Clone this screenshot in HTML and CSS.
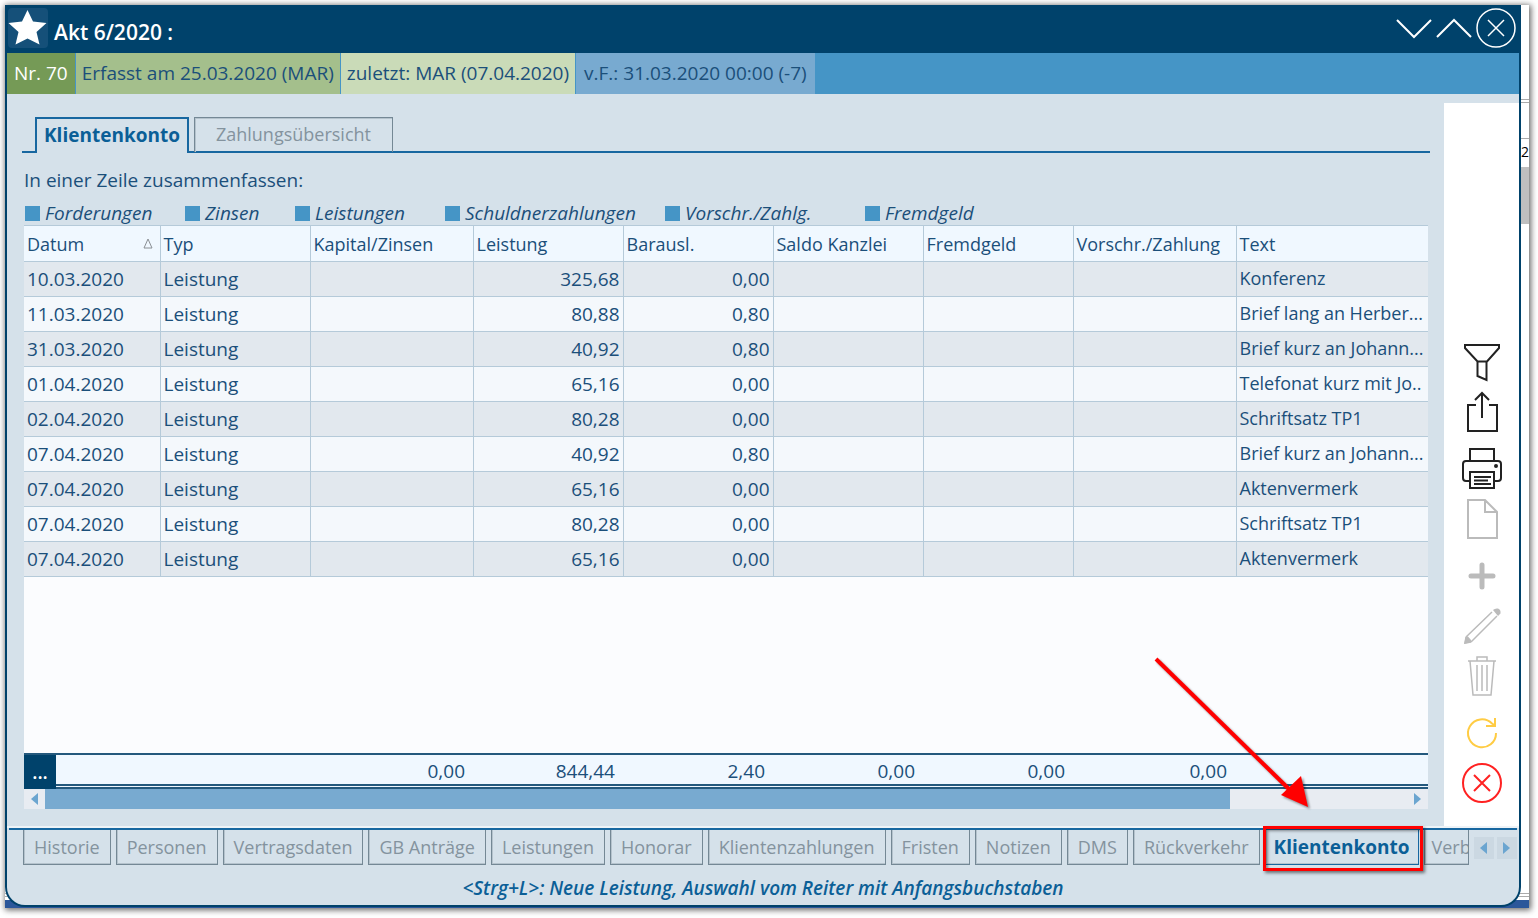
FILE: index.html
```html
<!DOCTYPE html>
<html lang="de">
<head>
<meta charset="utf-8">
<title>Akt 6/2020</title>
<link rel="stylesheet" href="styles.css">
</head>
<body>
<div class="frame">
  <main class="window">
    <header class="titlebar">
      <button class="star" aria-label="Favorit"><svg width="40" height="40" viewBox="0 0 40 40"><path fill="#fff" d="M19.500 2l5.500 11.500 13.500 1.500-10 9 3 12.500-12-6-12 6 3-12.500-10-9L14 13.500z"/></svg></button>
      <h1>Akt 6/2020 :</h1>
      <div class="controls">
        <button aria-label="Nach unten"><svg width="36" height="40" viewBox="0 0 36 40"><path d="M1 12l17 17 17-17"/></svg></button>
        <button aria-label="Nach oben"><svg width="36" height="40" viewBox="0 0 36 40"><path d="M1 29l17-17 17 17"/></svg></button>
        <button aria-label="Schließen"><svg width="40" height="40" viewBox="0 0 40 40"><circle cx="20" cy="20" r="19" stroke-width="1.500"/><path stroke-width="1.500" d="M12 12l16 16M28 12L12 28"/></svg></button>
      </div>
    </header>
    <div class="status">
      <span class="nr">Nr. 70</span>
      <span class="created">Erfasst am 25.03.2020 (MAR)</span>
      <span class="changed">zuletzt: MAR (07.04.2020)</span>
      <span class="deadline">v.F.: 31.03.2020 00:00 (-7)</span>
    </div>
    <div class="body">
      <section class="content">
        <nav class="toptabs">
          <button class="toptab current">Klientenkonto</button>
          <button class="toptab">Zahlungsübersicht</button>
        </nav>
        <p class="caption">In einer Zeile zusammenfassen:</p>
        <div class="checks">
          <label><input type="checkbox">Forderungen</label>
          <label><input type="checkbox">Zinsen</label>
          <label><input type="checkbox">Leistungen</label>
          <label><input type="checkbox">Schuldnerzahlungen</label>
          <label><input type="checkbox">Vorschr./Zahlg.</label>
          <label><input type="checkbox">Fremdgeld</label>
        </div>
        <div class="grid">
          <table>
            <colgroup><col class="c-date"><col class="c-std"><col class="c-wide"><col class="c-std"><col class="c-std"><col class="c-std"><col class="c-std"><col class="c-wide"><col></colgroup>
            <thead><tr><th><span class="sort">Datum<svg width="10" height="11" viewBox="0 0 10 11"><path d="M5 1L9 10H1z" fill="none" stroke="#8a8f94"/></svg></span></th><th>Typ</th><th>Kapital/Zinsen</th><th>Leistung</th><th>Barausl.</th><th>Saldo Kanzlei</th><th>Fremdgeld</th><th>Vorschr./Zahlung</th><th>Text</th></tr></thead>
            <tbody>
              <tr><td>10.03.2020</td><td>Leistung</td><td></td><td class="num">325,68</td><td class="num">0,00</td><td></td><td></td><td></td><td>Konferenz</td></tr>
              <tr><td>11.03.2020</td><td>Leistung</td><td></td><td class="num">80,88</td><td class="num">0,80</td><td></td><td></td><td></td><td>Brief lang an Herber...</td></tr>
              <tr><td>31.03.2020</td><td>Leistung</td><td></td><td class="num">40,92</td><td class="num">0,80</td><td></td><td></td><td></td><td>Brief kurz an Johann...</td></tr>
              <tr><td>01.04.2020</td><td>Leistung</td><td></td><td class="num">65,16</td><td class="num">0,00</td><td></td><td></td><td></td><td>Telefonat kurz mit Jo..</td></tr>
              <tr><td>02.04.2020</td><td>Leistung</td><td></td><td class="num">80,28</td><td class="num">0,00</td><td></td><td></td><td></td><td>Schriftsatz TP1</td></tr>
              <tr><td>07.04.2020</td><td>Leistung</td><td></td><td class="num">40,92</td><td class="num">0,80</td><td></td><td></td><td></td><td>Brief kurz an Johann...</td></tr>
              <tr><td>07.04.2020</td><td>Leistung</td><td></td><td class="num">65,16</td><td class="num">0,00</td><td></td><td></td><td></td><td>Aktenvermerk</td></tr>
              <tr><td>07.04.2020</td><td>Leistung</td><td></td><td class="num">80,28</td><td class="num">0,00</td><td></td><td></td><td></td><td>Schriftsatz TP1</td></tr>
              <tr><td>07.04.2020</td><td>Leistung</td><td></td><td class="num">65,16</td><td class="num">0,00</td><td></td><td></td><td></td><td>Aktenvermerk</td></tr>
            </tbody>
          </table>
        </div>
        <div class="totals">
          <button class="more">...</button>
          <span></span><span>0,00</span><span>844,44</span><span>2,40</span><span>0,00</span><span>0,00</span><span>0,00</span>
        </div>
        <div class="scrollbar">
          <button aria-label="Nach links"><svg width="7" height="12" viewBox="0 0 7 12"><path d="M7 0v12L0 6z"/></svg></button>
          <div class="track"><div class="thumb"></div></div>
          <button aria-label="Nach rechts"><svg width="7" height="12" viewBox="0 0 7 12"><path d="M0 0v12l7-6z"/></svg></button>
        </div>
      </section>
      <aside class="tools">
        <div class="group">
          <button aria-label="Filter"><svg width="42" height="42" viewBox="0 0 42 42" stroke="#222"><path d="M4 4h34v3L26 20.500H16.500L4 7zM16.500 20.500V35l9 4V20.500"/></svg></button>
          <button aria-label="Exportieren"><svg width="42" height="42" viewBox="0 0 42 42" stroke="#222"><path d="M15 14H7v26h29V14h-8M21 27V2M14 9l7-7 7 7"/></svg></button>
        </div>
        <div class="group">
          <button aria-label="Drucken"><svg width="42" height="42" viewBox="0 0 42 42" stroke="#222"><path d="M9 13V1h24v12M9 33H5q-3 0-3-3V16q0-3 3-3h32q3 0 3 3v14q0 3-3 3h-4M9 24h24v16H9zM13 29h17M13 32.500h14M13 36h17"/><circle cx="35" cy="18" r="1" fill="#222"/></svg></button>
          <button aria-label="Neu"><svg width="42" height="42" viewBox="0 0 42 42" stroke="#bbb"><path d="M7 2h17l12 12v26H7zM24 2v12h12"/></svg></button>
        </div>
        <div class="group">
          <button aria-label="Hinzufügen"><svg width="42" height="42" viewBox="0 0 42 42" stroke="#bbb" stroke-linecap="round"><path stroke-width="5" d="M21 10v22M10 21h22"/></svg></button>
          <button aria-label="Bearbeiten"><svg width="42" height="42" viewBox="0 0 42 42" stroke="#bbb"><path stroke-width="1.500" d="M5 32L31 7M10 37L36 11M5 32l-1 6 6-1"/><path stroke="none" fill="#bbb" d="M32 5q2-2 5-1.500 3 1 2.500 5L37 11zM3 39l2-8 2 .5 3 3.500.5 2z"/></svg></button>
          <button aria-label="Löschen"><svg width="42" height="42" viewBox="0 0 42 42" stroke="#bbb"><path stroke-width="1.500" d="M7 6h28M9 6l3 34h18l3-34M16 6V2h10v4M16 10v26M21 10v26M26 10v26"/></svg></button>
        </div>
        <div class="group">
          <button aria-label="Aktualisieren"><svg width="42" height="42" viewBox="0 0 42 42" stroke="#fc4"><path d="M35 21A14 14 0 1 1 31 11.500l3 2M34 6v8h-9"/></svg></button>
          <button aria-label="Abbrechen"><svg width="42" height="42" viewBox="0 0 42 42" stroke="#f22"><circle cx="21" cy="21" r="19"/><path d="M13 13l16 16M29 13L13 29"/></svg></button>
        </div>
      </aside>
    </div>
    <nav class="tabs">
      <button class="tab">Historie</button>
      <button class="tab">Personen</button>
      <button class="tab">Vertragsdaten</button>
      <button class="tab">GB Anträge</button>
      <button class="tab">Leistungen</button>
      <button class="tab">Honorar</button>
      <button class="tab">Klientenzahlungen</button>
      <button class="tab">Fristen</button>
      <button class="tab">Notizen</button>
      <button class="tab">DMS</button>
      <button class="tab">Rückverkehr</button>
      <div class="marked">
        <button class="tab current">Klientenkonto</button>
        <div class="highlight"></div>
        <svg class="arrow" width="160" height="160" viewBox="0 0 160 160"><path d="M3 3L139 136" stroke="#f00" stroke-width="4"/><path d="M155 151l-27-12 20-19z" fill="#f00"/></svg>
      </div>
      <button class="tab cut">Verb</button>
      <div class="pager">
        <button aria-label="Zurück"><svg width="7" height="12" viewBox="0 0 7 12"><path d="M7 0v12L0 6z"/></svg></button>
        <button aria-label="Weiter"><svg width="7" height="12" viewBox="0 0 7 12"><path d="M0 0v12l7-6z"/></svg></button>
      </div>
    </nav>
    <footer class="hint">&lt;Strg+L&gt;: Neue Leistung, Auswahl vom Reiter mit Anfangsbuchstaben</footer>
  </main>
  <div class="behind"><div class="lines"></div><div class="cell">2</div><div class="bar"></div></div>
</div>
</body>
</html>
```
FILE: styles.css
```css
* { box-sizing: border-box; }
body {
  margin: 0;
  height: 100vh;
  padding: 5px 9px 10px 5px;
  background: #fff;
  font: 19px/24px "Open Sans", "Noto Sans", sans-serif;
  color: #1b4f7a;
}
button {
  font: inherit;
  color: inherit;
  background: none;
  border: 0;
  padding: 0;
}
svg { display: block; fill: none; }

.frame {
  display: flex;
  height: 100%;
  background: linear-gradient(to top, #2b579a 8px, #fff 8px 11px, #aaa 11px 12px, #fff 12px 14px, #aaa 14px 15px, #fff 15px);
  box-shadow: 1px 1px 6px 1px rgba(0, 0, 0, .6);
}
.window {
  flex: 1;
  min-width: 0;
  display: flex;
  flex-direction: column;
  margin-bottom: 1px;
  border: 2px solid #00426b;
  border-top: 0;
  border-radius: 0 0 20px 20px;
  background: #d5e1ea;
}

.titlebar {
  display: flex;
  height: 48px;
  padding: 3px 3px 5px 1px;
  background: #00426b;
  color: #fff;
}
.star { width: 40px; height: 40px; border-radius: 4px; background: #155079; }
.titlebar h1 { margin: 0; padding: 12px 6px; font-size: 21px; font-weight: 600; line-height: 24px; }
.controls { display: flex; gap: 4px; margin-left: auto; }
.controls svg { stroke: #fff; stroke-width: 2; }

.status { display: flex; gap: 1px; height: 41px; background: #4595c6; line-height: 41px; white-space: nowrap; }
.status span { padding: 0 6px; }
.status .nr { padding: 0 7px; background: #759a56; color: #fff; }
.status .created { background: #a4bf8c; }
.status .changed { background: #cadbb8; }
.status .deadline { padding: 0 8px; background: #78aad0; }

.body { flex: 1; min-height: 0; display: flex; gap: 14px; border-bottom: 2px solid #eef3f7; }
.content { flex: 1; min-width: 0; display: flex; flex-direction: column; padding: 23px 0 17px 15px; }
.toptabs { display: flex; gap: 5px; height: 36px; padding: 0 13px; border-bottom: 2px solid #1767a0; }
.toptab { height: 35px; padding: 0 21px 2px; border: 1px solid #748895; border-bottom: 0; box-shadow: inset 1px 1px #b5c3cd; color: #84939e; font-size: 18px; }
.toptab.current { height: 36px; padding: 0 7px 2px; border: 2px solid #1767a0; border-bottom: 0; box-shadow: none; background: #d5e1ea; color: #0b5f97; font-size: 19px; font-weight: 700; }
.caption { margin: 15px 0 9px 2px; }
.checks { display: grid; grid-template-columns: 160px 110px 150px 220px 200px auto; height: 24px; padding-left: 3px; font-style: italic; }
.checks label { display: flex; align-items: center; gap: 5px; }
.checks input { appearance: none; width: 15px; height: 15px; margin: 0; background: #4595c6; }

.grid { flex: 1; margin: 0 2px; background: #fbfcfe; }
table { width: 100%; table-layout: fixed; border-collapse: collapse; }
.c-date { width: 136px; }
.c-std { width: 150px; }
.c-wide { width: 163px; }
th, td { height: 35px; padding: 0 3px; border: 1px solid #b5cad9; text-align: left; font-weight: 400; white-space: nowrap; }
th { height: 36px; background: #f0f8ff; }
th, td:last-child { font-size: 18px; }
td:last-child { padding-bottom: 2px; }
th:last-child, td:last-child { border-right: 0; }
tr > :first-child { border-left: 0; }
tbody tr { background: #f4f8fc; }
tbody tr:nth-child(odd) { background: #e2e8ee; }
td.num { text-align: right; }
.sort { display: flex; justify-content: space-between; align-items: center; padding-right: 4px; }

.totals {
  display: grid;
  grid-template-columns: 32px 105px 312px 150px 150px 150px 150px 162px;
  height: 36px;
  margin: 0 2px;
  border-top: 2px solid #24597d;
  border-bottom: 5px double #24597d;
  background: #f0f8ff;
  line-height: 32px;
  text-align: right;
}
.totals span { padding-right: 8px; }
.totals .more { height: 34px; background: #00426b; color: #fff; font-weight: 600; }

.scrollbar { display: flex; height: 20px; margin: 0 2px; background: #e8ecf2; }
.scrollbar button { width: 21px; display: grid; place-items: center; }
.scrollbar .track { flex: 1; }
.scrollbar .thumb { width: 87%; height: 20px; background: #78aad0; }
.scrollbar path, .pager path { fill: #6ba5d0; }

.tools { width: 75px; margin-top: 9px; padding-bottom: 18px; display: flex; flex-direction: column; justify-content: flex-end; gap: 7px; background: #fff; }
.tools button { width: 100%; height: 50px; display: grid; place-items: center; }
.tools svg { stroke-width: 2; }

.tabs { display: flex; gap: 5px; height: 37px; margin: 0 2px; padding-left: 14px; border-top: 2px solid #1767a0; }
.tab { flex: none; height: 35px; padding: 0 10px; border: 1px solid #748895; border-top: 0; box-shadow: inset 1px -1px #b5c3cd; color: #84939e; font-size: 18px; }
.tab.current { padding: 0 8px; border-color: #1767a0; color: #0b5f97; font-size: 19px; font-weight: 700; }
.tab.cut { flex: 0 0 45px; overflow: hidden; padding: 0 0 0 7px; text-align: left; }
.marked { position: relative; }
.highlight { position: absolute; inset: -4px -4px -6px -2px; border: 3px solid #f00; box-shadow: 2px 2px 3px rgba(0, 0, 0, .5), inset 2px 2px 3px rgba(0, 0, 0, .4); }
.arrow { position: absolute; left: -112px; top: -174px; filter: drop-shadow(2px 2px 1px rgba(0, 0, 0, .4)); }
.pager { display: flex; gap: 3px; margin: auto 2px auto auto; }
.pager button { width: 20px; height: 22px; display: grid; place-items: center; background: #cbd8e2; }

.hint { height: 40px; padding-top: 11px; text-align: center; font-style: italic; font-weight: 600; color: #0b5f97; }

.behind { width: 8px; color: #000; font: 14px/28px "Open Sans", sans-serif; }
.behind .lines { height: 98px; border-bottom: 4px double #aaa; }
.behind .cell { height: 64px; padding-top: 35px; line-height: 28px; background: linear-gradient(#fff 35px, #aaa 35px 36px, #fff 36px); }
.behind .bar { height: 57px; background: #bfbfbf; }
```
